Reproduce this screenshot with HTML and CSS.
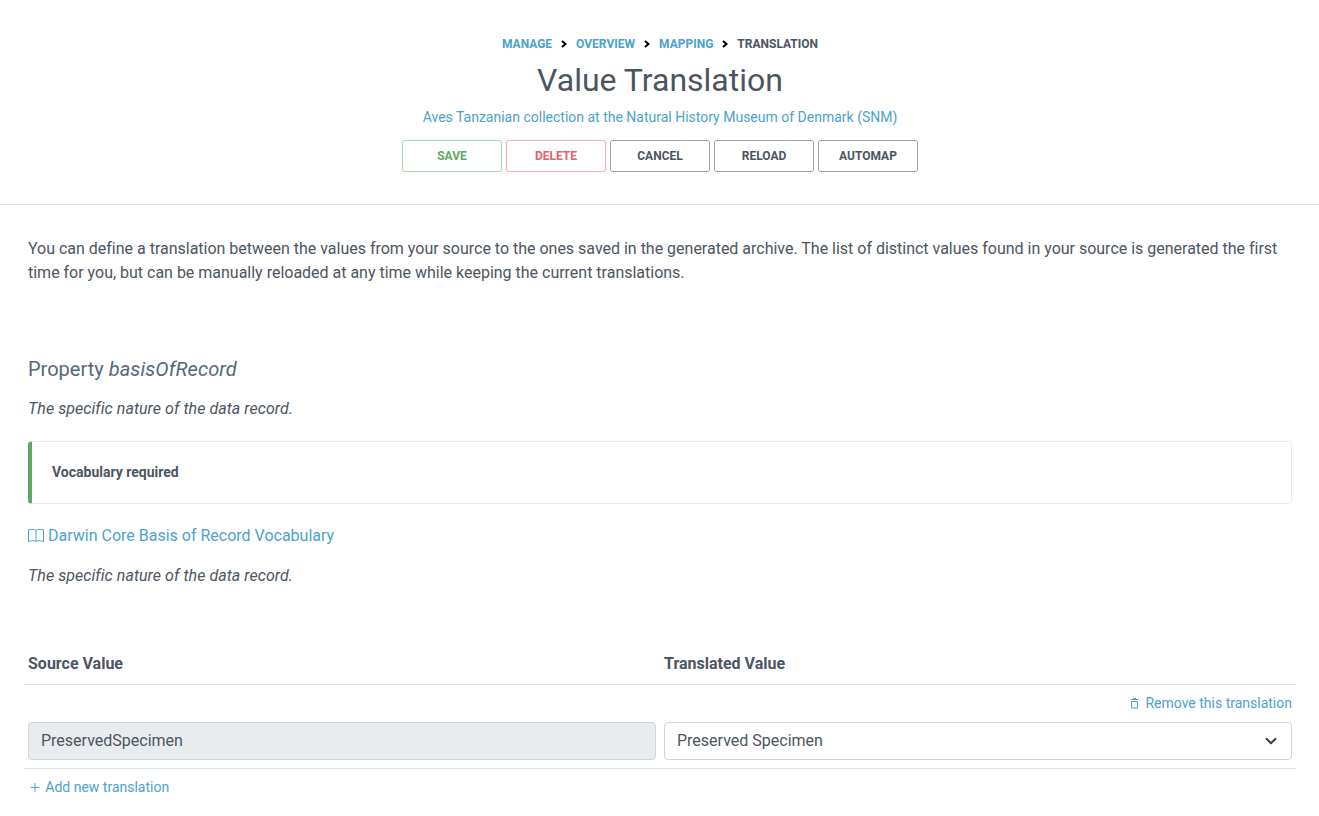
FILE: index.html
```html
<!DOCTYPE html>
<html lang="en">
<head>
<meta charset="utf-8">
<title>Value Translation</title>
<link rel="stylesheet" href="styles.css">
</head>
<body>
<div class="page">
<header class="page-header">
  <nav class="breadcrumb">
    <a href="#">Manage</a>
    <svg class="sep" viewBox="0 0 6 8"><path d="M1 1 4.500 4 1 7"/></svg>
    <a href="#">Overview</a>
    <svg class="sep" viewBox="0 0 6 8"><path d="M1 1 4.500 4 1 7"/></svg>
    <a href="#">Mapping</a>
    <svg class="sep" viewBox="0 0 6 8"><path d="M1 1 4.500 4 1 7"/></svg>
    <span>Translation</span>
  </nav>
  <h1>Value Translation</h1>
  <a class="resource" href="#">Aves Tanzanian collection at the Natural History Museum of Denmark (SNM)</a>
  <div class="actions">
    <button class="btn save">Save</button>
    <button class="btn delete">Delete</button>
    <button class="btn">Cancel</button>
    <button class="btn">Reload</button>
    <button class="btn">Automap</button>
  </div>
</header>
<main>
  <p class="intro">You can define a translation between the values from your source to the ones saved in the generated archive. The list of distinct values found in your source is generated the first time for you, but can be manually reloaded at any time while keeping the current translations.</p>
  <h2>Property <em>basisOfRecord</em></h2>
  <p class="desc">The specific nature of the data record.</p>
  <div class="callout">Vocabulary required</div>
  <a class="vocab" href="#"><svg class="book" viewBox="0 0 16 16"><path d="M8 2.500C6.800 1 3.400 1.100.500 1.900v11.600c2.900-.9 6.200-1.200 7.500 0 1.300-1.200 4.600-.9 7.500 0V1.900C12.600 1.100 9.200 1 8 2.500v11"/></svg>Darwin Core Basis of Record Vocabulary</a>
  <p class="desc">The specific nature of the data record.</p>
  <section class="table">
    <div class="row head"><div>Source Value</div><div>Translated Value</div></div>
    <div class="entry">
      <a class="link remove" href="#"><svg class="trash" viewBox="0 0 9 11"><path d="M.5 1.500h8M3 .500h3M1.500 3.500h6v6.500h-6z"/></svg>Remove this translation</a>
      <div class="row"><div class="field readonly">PreservedSpecimen</div><div class="field">Preserved Specimen<svg class="chevron" viewBox="0 0 16 16"><path d="m2 5 6 6 6-6"/></svg></div></div>
    </div>
    <a class="link add" href="#"><svg class="plus" viewBox="0 0 10 10"><path d="M5 0v9M.5 4.500h9"/></svg>Add new translation</a>
  </section>
</main>
</div>
</body>
</html>
```
FILE: styles.css
```css
* { box-sizing: border-box; }
body { margin: 0; overflow: hidden; background: #fff; color: #4c5561; font: 400 16px/24px Roboto, sans-serif; }
.page { width: 1320px; }
a { color: #4ba2ce; text-decoration: none; }
svg { fill: none; stroke: currentColor; flex: none; }
h1, h2, p { margin: 0; font-weight: 400; }
.page-header { height: 205px; padding-top: 35px; border-bottom: 1px solid #dee2e6; display: flex; flex-direction: column; align-items: center; }
.breadcrumb { display: flex; align-items: center; height: 18px; font-size: 12px; line-height: 18px; font-weight: 700; text-transform: uppercase; }
.sep { width: 6px; height: 8px; margin: 0 9.500px 0 8.500px; color: #000; stroke-width: 2; }
h1 { margin-top: 7px; font-size: 32px; line-height: 40px; }
.resource { margin-top: 7px; font-size: 14px; line-height: 21px; }
.actions { display: flex; gap: 4px; margin-top: 12px; }
.btn { width: 100px; height: 32px; padding: 0; border: 1px solid #a0a4a9; border-radius: 3px; background: #fff; color: #4c5561; font: 700 12px/18px Roboto, sans-serif; text-transform: uppercase; }
.save { border-color: #a9d4ae; color: #61a861; }
.delete { border-color: #f2aab5; color: #e4606d; }
main { padding: 32px 28px 0; }
.intro { letter-spacing: -0.009px; }
h2 { margin-top: 72px; font-size: 20px; line-height: 24px; color: #56677d; }
h2 em { letter-spacing: 0.08px; }
.desc { margin-top: 16px; font-style: italic; letter-spacing: 0.055px; }
.callout { height: 63px; margin: 20px 0; padding: 20px; border: 1px solid #e9ecef; border-left: 4px solid #61a861; border-radius: 4px; font-size: 14px; line-height: 21px; font-weight: 700; }
.vocab { display: flex; align-items: center; gap: 4px; }
.book { width: 16px; height: 16px; }
.table { margin: 56px -4px 0; }
.row { display: grid; grid-template-columns: 1fr 1fr; gap: 8px; padding: 0 4px; }
.head { height: 41px; padding-top: 8px; border-bottom: 1px solid #dee2e6; font-weight: 700; }
.entry { height: 84px; padding-top: 8px; border-bottom: 1px solid #dee2e6; }
.link { display: flex; align-items: center; font-size: 14px; line-height: 21px; }
.remove { justify-content: flex-end; gap: 6px; padding-right: 4px; margin-bottom: 8px; }
.trash { width: 9px; height: 11px; }
.field { display: flex; align-items: center; justify-content: space-between; height: 38px; padding: 0 12px; border: 1px solid #ced4da; border-radius: 4px; }
.readonly { background: #e9ecef; }
.chevron { width: 12px; height: 12px; margin-right: 2px; color: #343a40; stroke-width: 2.400; stroke-linecap: round; stroke-linejoin: round; }
.add { gap: 5px; margin-top: 8px; padding-left: 6.300px; }
.plus { width: 10px; height: 10px; }
```
